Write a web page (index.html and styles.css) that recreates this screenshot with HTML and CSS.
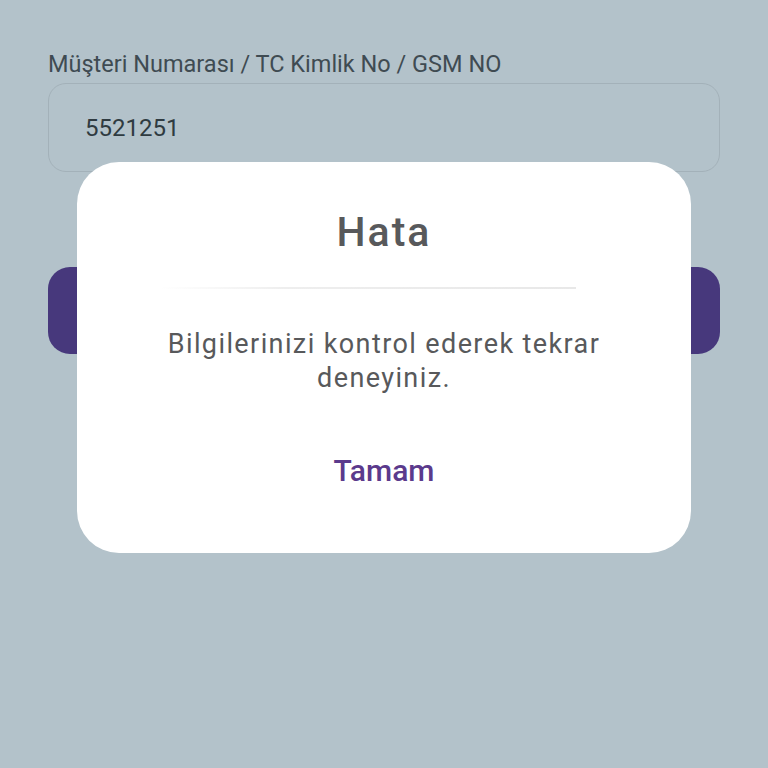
FILE: index.html
```html
<!DOCTYPE html>
<html lang="tr">
<head>
<meta charset="utf-8">
<link rel="stylesheet" href="styles.css">
</head>
<body>
<div class="screen">
  <div class="form">
    <label class="label">Müşteri Numarası / TC Kimlik No / GSM NO</label>
    <div class="input">5521251</div>
    <div class="submit"></div>
  </div>
  <div class="dialog">
    <h1 class="title">Hata</h1>
    <div class="divider"></div>
    <p class="message">Bilgilerinizi kontrol ederek tekrar deneyiniz.</p>
    <button class="ok">Tamam</button>
  </div>
</div>
</body>
</html>
```
FILE: styles.css
```css
html, body {
  margin: 0;
  padding: 0;
}
body {
  background: #b3c2ca;
  font-family: Roboto, "Noto Sans", sans-serif;
}
.screen {
  position: relative;
  width: 768px;
  height: 768px;
  overflow: hidden;
}
.form {
  padding: 48px 48px 0 48px;
  display: flex;
  flex-direction: column;
}
.label {
  font-size: 23.5px;
  color: #3f4b52;
  line-height: 32px;
}
.input {
  margin-top: 3px;
  height: 89px;
  box-sizing: border-box;
  border: 1px solid #a3b1b9;
  border-radius: 18px;
  display: flex;
  align-items: center;
  padding-left: 36px;
  font-size: 24px;
  color: #2f3b41;
}
.submit {
  margin-top: 95px;
  height: 87px;
  border-radius: 22px;
  background: #47387c;
}
.dialog {
  position: absolute;
  left: 77px;
  top: 162px;
  width: 614px;
  height: 391px;
  background: #fff;
  border-radius: 42px;
  display: flex;
  flex-direction: column;
  align-items: center;
  box-sizing: border-box;
  padding-top: 46px;
}
.title {
  margin: 0;
  font-size: 41px;
  font-weight: 500;
  color: #58595b;
  letter-spacing: 2px;
  line-height: 48px;
}
.divider {
  margin-top: 31px;
  margin-right: 32px;
  width: 416px;
  height: 2px;
  background: linear-gradient(to right, rgba(235,235,235,0), #eeeeee 30%, #e8e8e8);
}
.message {
  margin: 38px 0 0 0;
  width: 480px;
  text-align: center;
  font-size: 27px;
  line-height: 34px;
  letter-spacing: 1.4px;
  color: #58595b;
}
.ok {
  margin-top: 58px;
  border: none;
  background: none;
  padding: 0;
  font-family: Roboto, sans-serif;
  font-size: 30px;
  line-height: 36px;
  font-weight: 500;
  color: #5b3a8c;
}
```
